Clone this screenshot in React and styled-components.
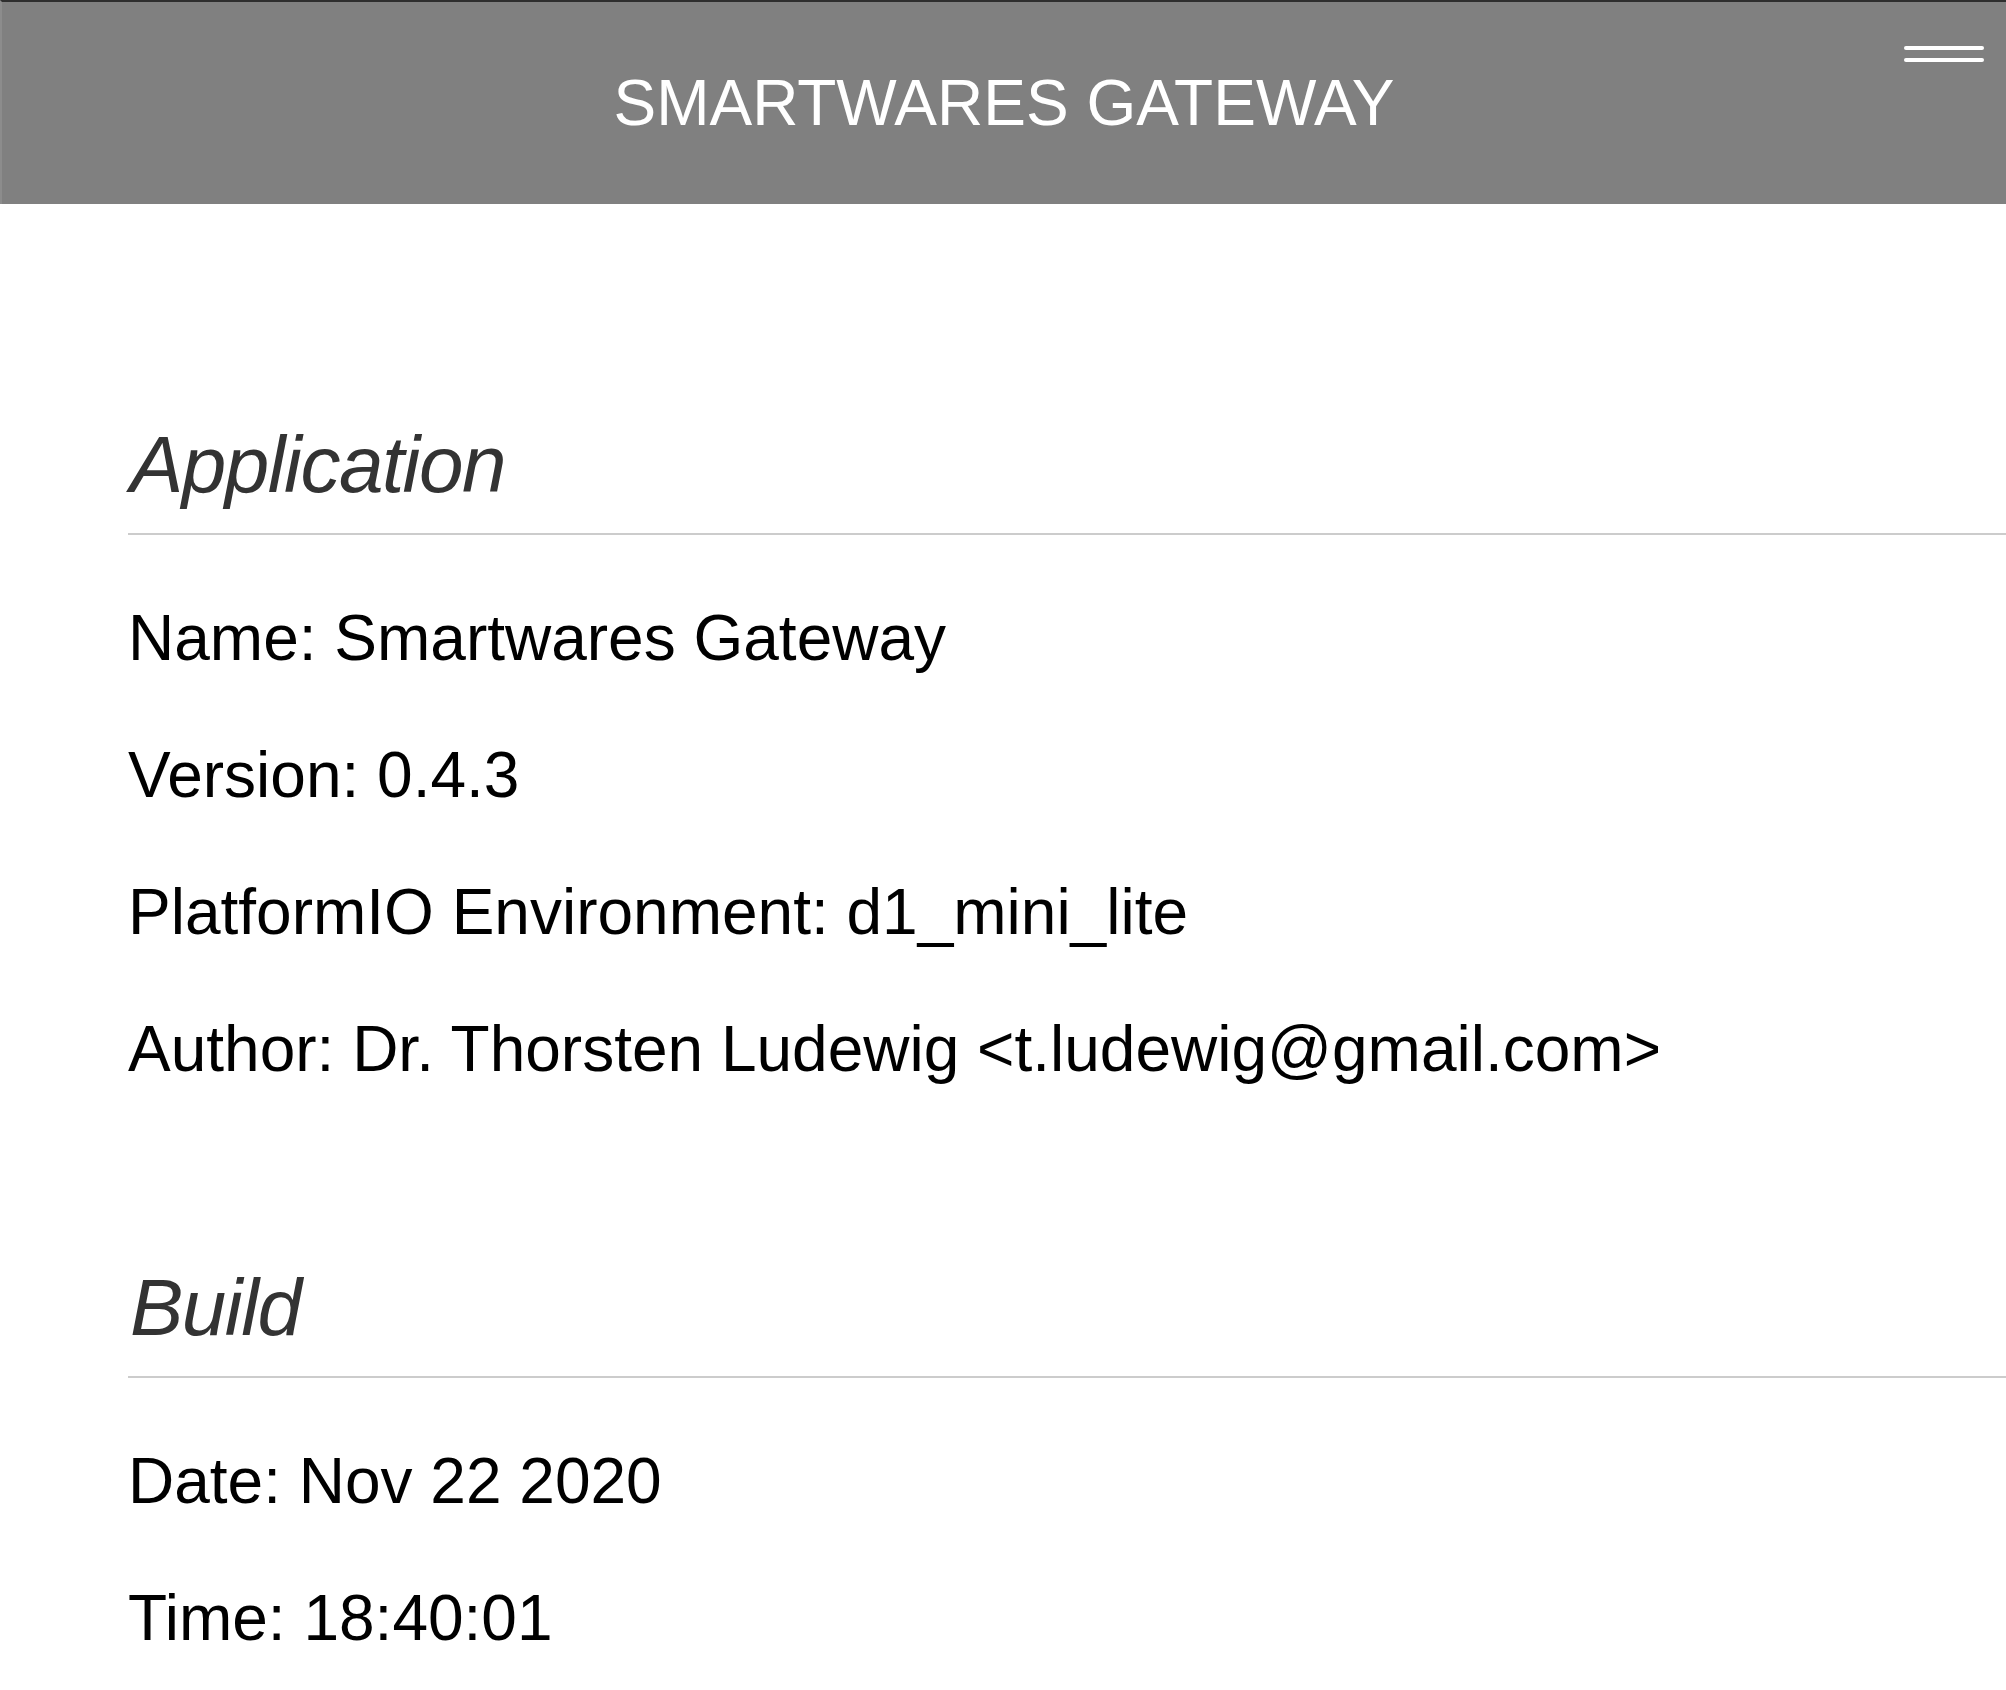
import React from 'react';
import styled, { createGlobalStyle } from 'styled-components';

const GlobalStyle = createGlobalStyle`
  html, body {
    margin: 0;
    padding: 0;
    background: #fff;
  }
  body {
    font-family: "Liberation Sans", Arial, Helvetica, sans-serif;
    color: #000;
  }
`;

const Header = styled.header`
  height: 202px;
  background: #808080;
  border-top: 2px solid #2e2e2e;
  border-left: 2px solid #8c8c8c;
  display: grid;
  grid-template-columns: 1fr auto 1fr;
  align-items: center;
`;

const Title = styled.h1`
  grid-column: 2;
  margin: 0;
  font-size: 64px;
  line-height: 74px;
  font-weight: normal;
  color: #fff;
  text-transform: uppercase;
`;

const MenuButton = styled.button`
  grid-column: 3;
  justify-self: end;
  align-self: start;
  margin: 44px 22px 0 0;
  padding: 0;
  border: 0;
  background: none;
  display: flex;
  flex-direction: column;
  gap: 8px;
  cursor: pointer;
`;

const Bar = styled.span`
  display: block;
  width: 80px;
  height: 4px;
  border-radius: 2px;
  background: #fff;
`;

const Main = styled.main`
  padding: 215px 0 30px 128px;
`;

const Section = styled.section`
  margin-top: ${props => (props.first ? '0' : '176px')};
`;

const SectionTitle = styled.h2`
  margin: 0 0 66px;
  padding: 0 0 22px 2px;
  border-bottom: 2px solid #cccccc;
  font-size: 80px;
  line-height: 92px;
  font-style: italic;
  font-weight: normal;
  letter-spacing: -1.5px;
  color: #333;
`;

const InfoList = styled.div`
  display: flex;
  flex-direction: column;
  gap: 63px;
`;

const InfoLine = styled.p`
  margin: 0;
  font-size: 64px;
  line-height: 74px;
  color: #000;
  white-space: nowrap;
`;

const sections = [
  {
    title: 'Application',
    lines: [
      'Name: Smartwares Gateway',
      'Version: 0.4.3',
      'PlatformIO Environment: d1_mini_lite',
      'Author: Dr. Thorsten Ludewig <t.ludewig@gmail.com>',
    ],
  },
  {
    title: 'Build',
    lines: ['Date: Nov 22 2020', 'Time: 18:40:01'],
  },
];

function App() {
  return (
    <>
      <GlobalStyle />
      <Header>
        <Title>Smartwares Gateway</Title>
        <MenuButton aria-label="Menu">
          <Bar />
          <Bar />
        </MenuButton>
      </Header>
      <Main>
        {sections.map((s, i) => (
          <Section key={s.title} first={i === 0}>
            <SectionTitle>{s.title}</SectionTitle>
            <InfoList>
              {s.lines.map(line => (
                <InfoLine key={line}>{line}</InfoLine>
              ))}
            </InfoList>
          </Section>
        ))}
      </Main>
    </>
  );
}

export default App;
